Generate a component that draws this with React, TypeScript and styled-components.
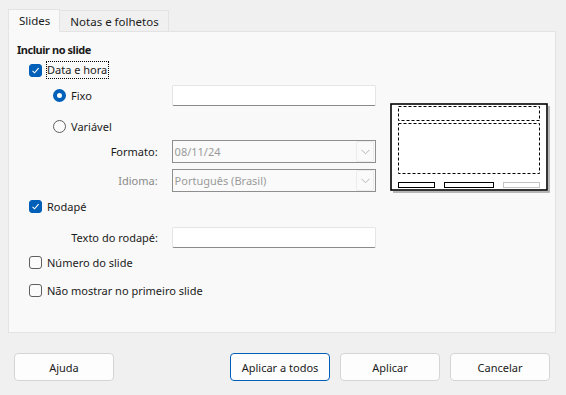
import styled, { createGlobalStyle } from 'styled-components';

const GlobalStyle = createGlobalStyle`
	html, body {
		margin: 0;
		padding: 0;
		background: #f0f0f0;
	}
	body {
		font-family: 'Noto Sans', 'Liberation Sans', sans-serif;
		font-size: 11px;
		color: #1b1b1b;
	}
`;

const Dialog = styled.div`
	width: 566px;
	height: 395px;
	box-sizing: border-box;
	padding: 9px 10px 0 8px;
	background: #f0f0f0;
	display: flex;
	flex-direction: column;
`;

const TabBar = styled.div`
	display: flex;
	align-items: flex-end;
	height: 22px;
	position: relative;
	z-index: 1;
`;

const Tab = styled.div<{ $active?: boolean }>`
	box-sizing: border-box;
	height: ${(p) => (p.$active ? '23px' : '21px')};
	padding: 0 9px 0 10px;
	display: flex;
	align-items: center;
	font-size: 11.5px;
	border: 1px solid #e3e3e3;
	border-bottom: ${(p) => (p.$active ? '1px solid #f9f9f9' : 'none')};
	background: ${(p) => (p.$active ? '#f9f9f9' : '#f0f0f0')};
	margin-bottom: ${(p) => (p.$active ? '-1px' : '0')};
	& + & {
		border-left: none;
	}
`;

const Panel = styled.div`
	box-sizing: border-box;
	height: 302px;
	border: 1px solid #e3e3e3;
	background: #f9f9f9;
	padding: 8px 8px 0 8px;
	display: flex;
	gap: 14px;
`;

const Form = styled.div`
	width: 359px;
	display: flex;
	flex-direction: column;
`;

const Row = styled.div<{ $top: number; $indent?: number; $h?: number }>`
	display: flex;
	align-items: center;
	height: ${(p) => p.$h ?? 18}px;
	margin-top: ${(p) => p.$top}px;
	padding-left: ${(p) => p.$indent ?? 0}px;
	gap: 5px;
`;

const Heading = styled.div`
	font-weight: 700;
	letter-spacing: -0.45px;
`;

const Box = styled.span<{ $checked?: boolean }>`
	box-sizing: border-box;
	width: 13px;
	height: 13px;
	border-radius: 3px;
	flex: none;
	display: inline-flex;
	align-items: center;
	justify-content: center;
	background: ${(p) => (p.$checked ? '#005fb8' : '#fbfbfb')};
	border: 1px solid ${(p) => (p.$checked ? '#005fb8' : '#5f5f5f')};
`;

const Radio = styled.span<{ $checked?: boolean }>`
	box-sizing: border-box;
	width: 13px;
	height: 13px;
	border-radius: 50%;
	flex: none;
	background: ${(p) => (p.$checked ? '#fff' : '#fbfbfb')};
	border: ${(p) => (p.$checked ? '4px solid #005fb8' : '1px solid #5f5f5f')};
`;

const Focus = styled.span`
	outline: 1px dotted #000;
	outline-offset: 0;
	padding: 0 1px 1px 0;
	line-height: 15px;
`;

const FieldLabel = styled.span<{ $disabled?: boolean }>`
	width: 141px;
	text-align: right;
	margin-right: 9px;
	color: ${(p) => (p.$disabled ? '#8a8a8a' : '#1b1b1b')};
`;

const TextInput = styled.div<{ $push?: boolean }>`
	box-sizing: border-box;
	width: 204px;
	height: 21px;
	margin-left: ${(p) => (p.$push ? 'auto' : '0')};
	background: #fff;
	border: 1px solid #e5e5e5;
	border-bottom: 1px solid #8a8a8a;
	border-radius: 2px;
`;

const Select = styled.div`
	box-sizing: border-box;
	width: 205px;
	height: 23px;
	border: 1px solid #8f8f8f;
	background: #fafafa;
	color: #9a9a9a;
	display: flex;
	align-items: center;
	padding-left: 2px;
`;

const SelectValue = styled.span`
	flex: 1;
`;

const Arrow = styled.span`
	width: 16px;
	height: 19px;
	margin-right: 1px;
	border: 1px solid #ececec;
	border-radius: 2px;
	display: flex;
	align-items: center;
	justify-content: center;
`;

const Preview = styled.div`
	margin-top: 63px;
`;

const ButtonBar = styled.div`
	display: flex;
	margin-top: 20px;
	padding-left: 6px;
	gap: 10px;
`;

const Button = styled.div<{ $default?: boolean; $spaced?: boolean }>`
	box-sizing: border-box;
	width: 100px;
	height: 28px;
	display: flex;
	align-items: center;
	justify-content: center;
	background: #fdfdfd;
	border: 1px solid ${(p) => (p.$default ? '#005fb8' : '#d5d5d5')};
	border-radius: 4px;
	margin-left: ${(p) => (p.$spaced ? '106px' : '0')};
`;

const Check = () => (
	<svg width="9" height="9" viewBox="0 0 9 9">
		<path d="M1.5 4.8 L3.6 6.8 L7.6 2.2" fill="none" stroke="#fff" strokeWidth="1.1" />
	</svg>
);

const Chevron = () => (
	<svg width="9" height="6" viewBox="0 0 9 6">
		<path d="M0.5 0.8 L4.5 4.8 L8.5 0.8" fill="none" stroke="#b5b5b5" strokeWidth="1" />
	</svg>
);

const SlidePreview = () => (
	<svg width="161" height="91" viewBox="0 0 161 91">
		<path d="M159 3 V89 H3" fill="none" stroke="#a0a0a0" strokeWidth="1.5" />
		<rect x="1" y="1" width="156" height="86" fill="#fff" stroke="#000" strokeWidth="1.6" />
		<g fill="none" stroke="#000" strokeWidth="1" strokeDasharray="3 2">
			<rect x="8.5" y="3.5" width="141" height="14" />
			<rect x="8.5" y="20.5" width="141" height="50" />
		</g>
		<rect x="8.5" y="79.5" width="36" height="5" fill="none" stroke="#000" />
		<rect x="54.5" y="79.5" width="49" height="5" fill="none" stroke="#000" />
		<rect x="113.5" y="79.5" width="36" height="5" fill="none" stroke="#c3c3c3" />
	</svg>
);

export default function App() {
	return (
		<>
			<GlobalStyle />
			<Dialog>
				<TabBar>
					<Tab $active>Slides</Tab>
					<Tab>Notas e folhetos</Tab>
				</TabBar>
				<Panel>
					<Form>
						<Row $top={0}>
							<Heading>Incluir no slide</Heading>
						</Row>
						<Row $top={3} $indent={12}>
							<Box $checked>
								<Check />
							</Box>
							<Focus>Data e hora</Focus>
						</Row>
						<Row $top={5} $indent={36} $h={22}>
							<Radio $checked />
							<span>Fixo</span>
							<TextInput $push />
						</Row>
						<Row $top={9} $indent={36} $h={22}>
							<Radio />
							<span>Variável</span>
						</Row>
						<Row $top={3} $h={23}>
							<FieldLabel>Formato:</FieldLabel>
							<Select>
								<SelectValue>08/11/24</SelectValue>
								<Arrow>
									<Chevron />
								</Arrow>
							</Select>
						</Row>
						<Row $top={6} $h={23}>
							<FieldLabel $disabled>Idioma:</FieldLabel>
							<Select>
								<SelectValue>Português (Brasil)</SelectValue>
								<Arrow>
									<Chevron />
								</Arrow>
							</Select>
						</Row>
						<Row $top={5} $indent={12}>
							<Box $checked>
								<Check />
							</Box>
							<span>Rodapé</span>
						</Row>
						<Row $top={11} $h={22}>
							<FieldLabel>Texto do rodapé:</FieldLabel>
							<TextInput />
						</Row>
						<Row $top={5} $indent={12}>
							<Box />
							<span>Número do slide</span>
						</Row>
						<Row $top={10} $indent={12}>
							<Box />
							<span>Não mostrar no primeiro slide</span>
						</Row>
					</Form>
					<Preview>
						<SlidePreview />
					</Preview>
				</Panel>
				<ButtonBar>
					<Button>Ajuda</Button>
					<Button $default $spaced>
						Aplicar a todos
					</Button>
					<Button>Aplicar</Button>
					<Button>Cancelar</Button>
				</ButtonBar>
			</Dialog>
		</>
	);
}
